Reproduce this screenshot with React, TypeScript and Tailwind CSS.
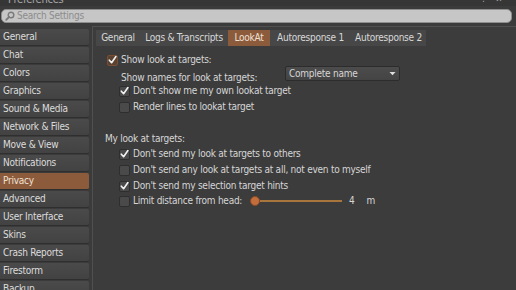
import { useState } from "react";

const sideItems = [
  "General",
  "Chat",
  "Colors",
  "Graphics",
  "Sound & Media",
  "Network & Files",
  "Move & View",
  "Notifications",
  "Privacy",
  "Advanced",
  "User Interface",
  "Skins",
  "Crash Reports",
  "Firestorm",
  "Backup",
];

const tabs = [
  { label: "General", w: "w-[44px]" },
  { label: "Logs & Transcripts", w: "w-[88px]" },
  { label: "LookAt", w: "w-[42px]" },
  { label: "Autoresponse 1", w: "w-[81px]" },
  { label: "Autoresponse 2", w: "w-[75px]" },
];

const CheckBox = ({ checked, focus }: { checked?: boolean; focus?: boolean }) => (
  <div
    className={`w-[11px] h-[11px] shrink-0 rounded-[2px] border flex items-center justify-center ${
      focus ? "border-[#7a4e32] bg-[#5a4232]" : "border-[#2e2e2e] bg-[#4a4a4a]"
    }`}
  >
    {checked && (
      <svg width="10" height="10" viewBox="0 0 10 10">
        <path d="M1.5 5.2 L4 8 L8.8 1.2" fill="none" stroke="#f2f2f2" strokeWidth="1.8" strokeLinecap="round" strokeLinejoin="round" />
      </svg>
    )}
  </div>
);

const Row = ({
  checked,
  label,
  focus,
  className = "",
}: {
  checked?: boolean;
  label: string;
  focus?: boolean;
  className?: string;
}) => (
  <div className={`h-[16px] flex items-center gap-[3px] ${className}`}>
    <CheckBox checked={checked} focus={focus} />
    <span>{label}</span>
  </div>
);

const App = () => {
  const [active, setActive] = useState("Privacy");

  return (
    <div className="w-[516px] h-[290px] overflow-hidden bg-[#3b3b3b] text-[10px] tracking-[-0.25px] text-[#d6d6d6] font-['DejaVu_Sans_Condensed','DejaVu_Sans',sans-serif] leading-none">
      {/* title bar, mostly scrolled out */}
      <div className="-mt-[7px] h-[13px] flex items-center justify-between px-[8px] bg-[#363636]">
        <span className="text-[11px] text-[#a8a8a8]">Preferences</span>
        <div className="flex gap-[10px] pr-[6px] text-[#b0b0b0] text-[9px]">
          <span>?</span>
          <span>✕</span>
        </div>
      </div>

      <div className="pt-[3px] px-[1px] pr-[4px]">
        <div className="h-[14px] rounded-[5px] bg-[#c6c6c6] border border-[#8e8e8e] flex items-center pl-[3px] gap-[2px]">
          <svg width="10" height="10" viewBox="0 0 10 10">
            <circle cx="6" cy="4" r="2.8" fill="none" stroke="#7a7a7a" strokeWidth="1.4" />
            <path d="M4 6 L1.2 8.8" stroke="#7a7a7a" strokeWidth="1.8" strokeLinecap="round" />
          </svg>
          <span className="text-[#8c8c8c] text-[10px]">Search Settings</span>
        </div>
      </div>

      <div className="flex mt-[3px]">
        <div className="w-[89px] flex flex-col gap-[1px] pt-[3px]">
          {sideItems.map((item) => (
            <div
              key={item}
              onClick={() => setActive(item)}
              className={`h-[17px] flex items-center pl-[3px] rounded-r-[2px] border-b border-[#2f2f2f] ${
                active === item
                  ? "bg-[#8c5b3c] text-[#f0e0d4]"
                  : "bg-gradient-to-b from-[#4a4a4a] to-[#424242] text-[#dcdcdc]"
              }`}
            >
              {item}
            </div>
          ))}
        </div>

        <div className="ml-[3px] flex-1 h-[270px] border-l border-t border-[#505050] bg-[#3c3c3c]">
          <div className="flex gap-0 pl-[3px] pt-[3px]">
            {tabs.map((t) => (
              <div
                key={t.label}
                className={`${t.w} h-[16px] flex items-center justify-center ${
                  t.label === "LookAt" ? "bg-[#8c5b3c] text-[#f0e0d4]" : "bg-[#474747] text-[#d8d8d8]"
                }`}
              >
                {t.label}
              </div>
            ))}
          </div>

          <div className="pl-[14px] pt-[6px] flex flex-col">
            <Row checked focus label="Show look at targets:" />
            <div className="h-[16px] flex items-end pl-[14px]">
              <span className="w-[164px] pb-[1px]">Show names for look at targets:</span>
              <div className="mb-[3px] w-[115px] h-[15px] bg-gradient-to-b from-[#4c4c4c] to-[#444444] border border-[#2c2c2c] rounded-[2px] flex items-center justify-between px-[3px]">
                <span>Complete name</span>
                <svg width="7" height="5" viewBox="0 0 7 5">
                  <path d="M0.5 1 L6.5 1 L3.5 4.2 Z" fill="#e0e0e0" />
                </svg>
              </div>
            </div>
            <div className="pl-[12px] flex flex-col">
              <Row checked label="Don't show me my own lookat target" className="-mt-[1px]" />
              <Row label="Render lines to lookat target" />
            </div>

            <div className="h-[16px] flex items-center -ml-[2px] mt-[16px]">My look at targets:</div>
            <div className="pl-[12px] flex flex-col">
              <Row checked label="Don't send my look at targets to others" className="-mt-[1px]" />
              <Row label="Don't send any look at targets at all, not even to myself" />
              <Row checked label="Don't send my selection target hints" />
              <div className="h-[16px] -mt-[1px] flex items-center gap-[3px]">
                <CheckBox />
                <span className="w-[114px]">Limit distance from head:</span>
                <div className="w-[92px] h-[12px] flex items-center">
                  <div className="w-[10px] h-[10px] rounded-full bg-[#c26d3c] border border-[#8a4a28] shrink-0" />
                  <div className="flex-1 h-[2px] bg-[#a8753c]" />
                </div>
                <span className="ml-[4px]">4</span>
                <span className="ml-[9px]">m</span>
              </div>
            </div>
          </div>
        </div>
      </div>
    </div>
  );
};

export default App;
